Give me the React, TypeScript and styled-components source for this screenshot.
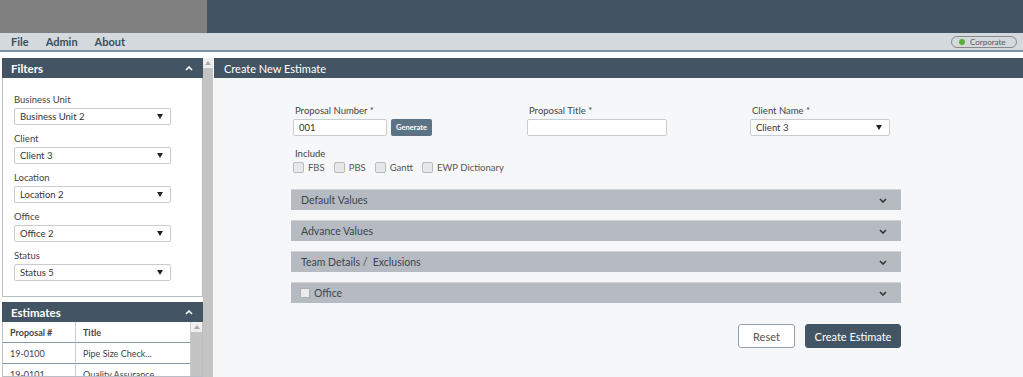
import styled, { createGlobalStyle } from "styled-components";

const Global = createGlobalStyle`
  html, body {
    margin: 0;
    padding: 0;
    background: #ffffff;
    overflow: hidden;
  }
  body {
    font-family: "Lato", "Open Sans", sans-serif;
    color: #333;
  }
`;

const Page = styled.div`
  width: 1023px;
  height: 377px;
  display: flex;
  flex-direction: column;
  overflow: hidden;
`;

const TopBar = styled.div`
  height: 33px;
  display: flex;
  .logo {
    width: 207px;
    background: #808080;
  }
  .rest {
    flex: 1;
    background: #425463;
  }
`;

const MenuBar = styled.div`
  height: 17px;
  background: #d4d9dd;
  border-bottom: 2px solid #7d92a4;
  display: flex;
  align-items: center;
  padding: 0 6px 0 11px;
`;

const MenuItem = styled.span`
  font-size: 11px;
  font-weight: 700;
  color: #3d4d5b;
  margin-right: 17px;
`;

const Pill = styled.div`
  margin-left: auto;
  height: 10px;
  width: 57px;
  border: 1px solid #8a8a8a;
  border-radius: 6px;
  display: flex;
  align-items: center;
  font-size: 8px;
  color: #555;
  padding-left: 7px;
  box-sizing: content-box;
  gap: 5px;
  &::before {
    content: "";
    width: 6px;
    height: 6px;
    border-radius: 50%;
    background: #5cae3a;
  }
`;

const Body = styled.div`
  flex: 1;
  display: flex;
  padding-top: 6px;
  min-height: 0;
`;

const Sidebar = styled.div`
  width: 203px;
  padding-left: 2px;
  box-sizing: border-box;
  display: flex;
  flex-direction: column;
  gap: 5px;
`;

const Scroll = styled.div<{ $w: number }>`
  width: ${(p) => p.$w}px;
  background: #c4c4c4;
  position: relative;
  flex-shrink: 0;
  &::before {
    content: "";
    display: block;
    height: 10px;
    background: #efefef;
  }
  &::after {
    content: "";
    position: absolute;
    top: 3px;
    left: 50%;
    margin-left: -3px;
    border-left: 3px solid transparent;
    border-right: 3px solid transparent;
    border-bottom: 4px solid #a8a8a8;
  }
`;

const Panel = styled.div<{ $grow?: boolean }>`
  border: 1px solid #b9bfc5;
  border-top: none;
  display: flex;
  flex-direction: column;
  background: #fff;
  flex: ${(p) => (p.$grow ? "1" : "none")};
  min-height: 0;
`;

const PanelHead = styled.div`
  height: 20px;
  flex-shrink: 0;
  background: #435565;
  color: #fff;
  font-size: 11.5px;
  font-weight: 700;
  display: flex;
  align-items: center;
  justify-content: space-between;
  padding: 0 10px 0 9px;
  margin: 0 -1px;
`;

const Caret = ({ up, color }: { up?: boolean; color: string }) => (
  <svg width="8" height="5" viewBox="0 0 8 5">
    <path
      d={up ? "M1 4 L4 1 L7 4" : "M1 1 L4 4 L7 1"}
      fill="none"
      stroke={color}
      strokeWidth="1.6"
    />
  </svg>
);

const FilterBody = styled.div`
  padding: 16px 0 15px 11px;
  display: flex;
  flex-direction: column;
  gap: 8px;
`;

const Field = styled.div`
  display: flex;
  flex-direction: column;
  gap: 3px;
`;

const Label = styled.label`
  font-size: 9.5px;
  color: #444;
  line-height: 11px;
`;

const Select = styled.div<{ $w: number }>`
  width: ${(p) => p.$w}px;
  height: 17px;
  box-sizing: border-box;
  border: 1px solid #c9cdd1;
  border-radius: 2px;
  background: #fff;
  font-size: 9.5px;
  color: #333;
  display: flex;
  align-items: center;
  padding: 0 7px 0 5px;
  justify-content: space-between;
  &::after {
    content: "";
    border-left: 3px solid transparent;
    border-right: 3px solid transparent;
    border-top: 5px solid #222;
  }
`;

const Input = styled.div<{ $w: number }>`
  width: ${(p) => p.$w}px;
  height: 17px;
  box-sizing: border-box;
  border: 1px solid #c9cdd1;
  border-radius: 2px;
  background: #fff;
  font-size: 9.5px;
  color: #333;
  display: flex;
  align-items: center;
  padding-left: 5px;
`;

const Table = styled.div`
  display: flex;
  flex: 1;
  min-height: 0;
  overflow: hidden;
`;

const TableGrid = styled.div`
  flex: 1;
  display: grid;
  grid-template-columns: 73px 1fr;
  grid-auto-rows: 21px;
  align-content: start;
`;

const Cell = styled.div<{ $head?: boolean }>`
  font-size: 9px;
  font-weight: ${(p) => (p.$head ? 700 : 400)};
  color: #444;
  display: flex;
  align-items: center;
  padding-left: 7px;
  border-bottom: 1px solid #8797a5;
  border-right: 1px solid #c9cdd1;
`;

const Main = styled.div`
  flex: 1;
  margin-left: 1px;
  display: flex;
  flex-direction: column;
  background: #f6f7f9;
`;

const MainHead = styled.div`
  height: 20px;
  background: #435565;
  color: #fff;
  font-size: 11px;
  display: flex;
  align-items: center;
  padding-left: 10px;
`;

const Form = styled.div`
  padding: 27px 0 0 77px;
  width: 610px;
`;

const FieldRow = styled.div`
  display: grid;
  grid-template-columns: 234px 223px auto;
  padding-left: 2px;
  ${Label} {
    padding-left: 2px;
  }
`;

const InputGroup = styled.div`
  display: flex;
  gap: 4px;
  align-items: center;
`;

const SmallButton = styled.div`
  height: 17px;
  padding: 0 5px;
  background: #5c7386;
  color: #fff;
  font-size: 7.5px;
  font-weight: 700;
  border-radius: 2px;
  display: flex;
  align-items: center;
`;

const Include = styled.div`
  margin-top: 12px;
  padding-left: 2px;
  display: flex;
  flex-direction: column;
  gap: 3px;
  ${Label} {
    padding-left: 2px;
  }
`;

const CheckRow = styled.div`
  display: flex;
  gap: 9px;
`;

const Check = styled.span`
  display: flex;
  align-items: center;
  gap: 4px;
  font-size: 9.5px;
  color: #555;
  &::before {
    content: "";
    width: 9px;
    height: 9px;
    border: 1px solid #b8bcc0;
    border-radius: 2px;
    background: #e6e8ea;
  }
`;

const Accordions = styled.div`
  margin-top: 16px;
  display: flex;
  flex-direction: column;
  gap: 10px;
`;

const Accordion = styled.div`
  height: 21px;
  background: #b5bbc1;
  border-top: 1px solid #d0d4d8;
  box-sizing: border-box;
  display: flex;
  align-items: center;
  justify-content: space-between;
  padding: 0 14px 0 10px;
  font-size: 10.5px;
  color: #3b4650;
`;

const AccTitle = styled.span`
  display: flex;
  align-items: center;
  gap: 4px;
`;

const BoxIcon = styled.span`
  width: 8px;
  height: 8px;
  border: 1px solid #a9afb4;
  background: #e9ebed;
  margin-left: -1px;
`;

const Actions = styled.div`
  margin-top: 21px;
  display: flex;
  justify-content: flex-end;
  gap: 10px;
`;

const Button = styled.div<{ $primary?: boolean }>`
  height: 24px;
  box-sizing: border-box;
  border-radius: 3px;
  font-size: 11px;
  white-space: nowrap;
  display: flex;
  align-items: center;
  justify-content: center;
  background: ${(p) => (p.$primary ? "#435565" : "#fff")};
  color: ${(p) => (p.$primary ? "#fff" : "#555")};
  border: 1px solid ${(p) => (p.$primary ? "#435565" : "#9aa2a9")};
  width: ${(p) => (p.$primary ? 96 : 57)}px;
`;

const filters = [
  ["Business Unit", "Business Unit 2"],
  ["Client", "Client 3"],
  ["Location", "Location 2"],
  ["Office", "Office 2"],
  ["Status", "Status 5"],
];

const estimates = [
  ["19-0100", "Pipe Size Check..."],
  ["19-0101", "Quality Assurance"],
];

const sections = ["Default Values", "Advance Values", "Team Details /\u00a0 Exclusions"];

const App = () => {
  return (
    <Page>
      <Global />
      <TopBar>
        <div className="logo" />
        <div className="rest" />
      </TopBar>
      <MenuBar>
        <MenuItem>File</MenuItem>
        <MenuItem>Admin</MenuItem>
        <MenuItem>About</MenuItem>
        <Pill>Corporate</Pill>
      </MenuBar>
      <Body>
        <Sidebar>
          <Panel>
            <PanelHead>
              Filters
              <Caret up color="#fff" />
            </PanelHead>
            <FilterBody>
              {filters.map(([label, value]) => (
                <Field key={label}>
                  <Label>{label}</Label>
                  <Select $w={157}>{value}</Select>
                </Field>
              ))}
            </FilterBody>
          </Panel>
          <Panel $grow>
            <PanelHead>
              Estimates
              <Caret up color="#fff" />
            </PanelHead>
            <Table>
              <TableGrid>
                <Cell $head>Proposal #</Cell>
                <Cell $head>Title</Cell>
                {estimates.map(([no, title]) => [
                  <Cell key={no}>{no}</Cell>,
                  <Cell key={no + "t"}>{title}</Cell>,
                ])}
              </TableGrid>
              <Scroll $w={11} />
            </Table>
          </Panel>
        </Sidebar>
        <Scroll $w={10} />
        <Main>
          <MainHead>Create New Estimate</MainHead>
          <Form>
            <FieldRow>
              <Field>
                <Label>Proposal Number *</Label>
                <InputGroup>
                  <Input $w={94}>001</Input>
                  <SmallButton>Generate</SmallButton>
                </InputGroup>
              </Field>
              <Field>
                <Label>Proposal Title *</Label>
                <Input $w={140} />
              </Field>
              <Field>
                <Label>Client Name *</Label>
                <Select $w={140}>Client 3</Select>
              </Field>
            </FieldRow>
            <Include>
              <Label>Include</Label>
              <CheckRow>
                <Check>FBS</Check>
                <Check>PBS</Check>
                <Check>Gantt</Check>
                <Check>EWP Dictionary</Check>
              </CheckRow>
            </Include>
            <Accordions>
              {sections.map((s) => (
                <Accordion key={s}>
                  <AccTitle>{s}</AccTitle>
                  <Caret color="#333" />
                </Accordion>
              ))}
              <Accordion>
                <AccTitle>
                  <BoxIcon />
                  Office
                </AccTitle>
                <Caret color="#333" />
              </Accordion>
            </Accordions>
            <Actions>
              <Button>Reset</Button>
              <Button $primary>Create Estimate</Button>
            </Actions>
          </Form>
        </Main>
      </Body>
    </Page>
  );
};

export default App;
